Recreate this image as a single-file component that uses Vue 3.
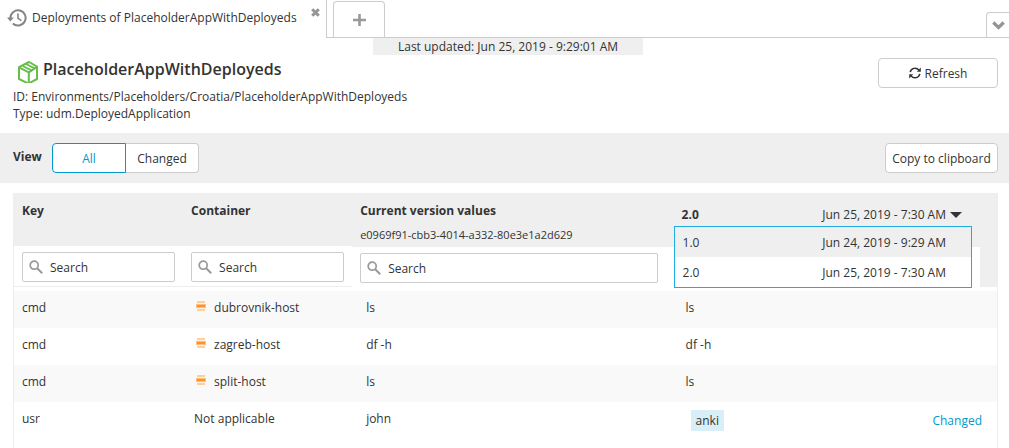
<script setup>
import { ref, computed } from 'vue'

const view = ref('All')
const search = ref({ key: '', container: '', value: '' })
const versions = [
  { name: '1.0', date: 'Jun 24, 2019 - 9:29 AM' },
  { name: '2.0', date: 'Jun 25, 2019 - 7:30 AM' },
]
const selected = ref(versions[1])
const open = ref(true)
const rows = [
  { key: 'cmd', container: 'dubrovnik-host', host: true, current: 'ls', other: 'ls' },
  { key: 'cmd', container: 'zagreb-host', host: true, current: 'df -h', other: 'df -h' },
  { key: 'cmd', container: 'split-host', host: true, current: 'ls', other: 'ls' },
  { key: 'usr', container: 'Not applicable', host: false, current: 'john', other: 'anki', changed: true },
]
const shown = computed(() =>
  rows.filter(
    (r) =>
      (view.value === 'All' || r.changed) &&
      r.key.includes(search.value.key) &&
      r.container.includes(search.value.container) &&
      r.current.includes(search.value.value)
  )
)
function choose(v) {
  selected.value = v
  open.value = false
}
</script>

<template>
  <div class="page">
    <header class="tabs">
      <div class="tab">
        <svg class="history" viewBox="0 0 20 18" aria-hidden="true">
          <path d="M3.4 9a7.6 7.6 0 1 1 2.4 5.5" fill="none" stroke="#858585" stroke-width="2" />
          <path d="M0 8.6h6.8L3.4 12.4z" fill="#858585" />
          <path d="M11 4.6V9.4l3.4 2.2" fill="none" stroke="#858585" stroke-width="1.6" />
        </svg>
        <span class="tab-title">Deployments of PlaceholderAppWithDeployeds</span>
        <button class="close" type="button" aria-label="Close tab">
          <svg viewBox="0 0 9 9" width="9" height="9"><path d="M1.2 1.2l6.6 6.6M7.8 1.2L1.2 7.8" stroke="#959595" stroke-width="3" /></svg>
        </button>
      </div>
      <div class="strip">
        <button class="add" type="button" aria-label="New tab">
          <svg viewBox="0 0 13 12" width="13" height="12"><path d="M0 6h13M6.5 0v12" stroke="#999" stroke-width="2.6" /></svg>
        </button>
        <button class="more" type="button" aria-label="More tabs">
          <svg viewBox="0 0 13 9" width="13" height="9"><path d="M1.3 1.5l5.2 5 5.2-5" fill="none" stroke="#959595" stroke-width="3.2" /></svg>
        </button>
      </div>
    </header>

    <div class="updated-line"><div class="updated">Last updated: Jun 25, 2019 - 9:29:01 AM</div></div>

    <section class="intro">
      <div class="facts">
        <h1>
          <svg class="box" viewBox="0 0 20 22" aria-hidden="true">
            <g fill="none" stroke="#68bd4b" stroke-width="2" stroke-linejoin="round">
              <path d="M1 18V6.2L11 1l8 4.6V18l-8.5 4.6z" />
              <path d="M1 6.4l9.8 5L19 6M10.8 11.4V22" />
              <path d="M4.6 5l9.4 4.6M8 3l8.6 4.4" stroke-width="1.8" />
            </g>
          </svg>
          PlaceholderAppWithDeployeds
        </h1>
        <p>ID: Environments/Placeholders/Croatia/PlaceholderAppWithDeployeds</p>
        <p>Type: udm.DeployedApplication</p>
      </div>
      <button class="btn refresh" type="button">
        <svg viewBox="0 0 12 12" width="12" height="12" aria-hidden="true">
          <g fill="none" stroke="#333" stroke-width="1.5">
            <path d="M1.2 5.2A4.9 4.9 0 0 1 9.8 3" />
            <path d="M10.8 6.8A4.9 4.9 0 0 1 2.2 9" />
          </g>
          <path d="M11.8 .6v4.2H7.8zM.2 11.4V7.2h4z" fill="#333" />
        </svg>
        Refresh
      </button>
    </section>

    <section class="toolbar">
      <span id="view-label" class="view-label">View</span>
      <div class="segment" role="group" aria-labelledby="view-label">
        <button
          v-for="v in ['All', 'Changed']"
          :key="v"
          type="button"
          :class="{ on: view === v }"
          :aria-pressed="view === v"
          @click="view = v"
        >{{ v }}</button>
      </div>
      <button class="btn copy" type="button">Copy to clipboard</button>
    </section>

    <table>
      <colgroup>
        <col class="c-key" /><col class="c-container" /><col class="c-current" /><col />
      </colgroup>
      <thead>
        <tr class="heads">
          <th scope="col">Key</th>
          <th scope="col">Container</th>
          <th scope="col">Current version values<small>e0969f91-cbb3-4014-a332-80e3e1a2d629</small></th>
          <th scope="col" class="version">
            <div class="picker">
              <button class="picked" type="button" aria-haspopup="listbox" :aria-expanded="open" @click="open = !open">
                <b>{{ selected.name }}</b>
                <span>{{ selected.date }}</span>
                <svg viewBox="0 0 12 6" width="12" height="6" aria-hidden="true"><path d="M0 0h12L6 6z" fill="#333" /></svg>
              </button>
              <ul v-if="open" class="menu" role="listbox" aria-label="Version">
                <li v-for="(v, i) in versions" :key="v.name" role="option" :aria-selected="v === selected" :class="{ hot: i === 0 }" @click="choose(v)">
                  <span>{{ v.name }}</span><span>{{ v.date }}</span>
                </li>
              </ul>
            </div>
          </th>
        </tr>
        <tr class="filters">
          <td v-for="f in ['key', 'container', 'value']" :key="f" :class="f">
            <div class="filter">
              <label class="field">
                <svg viewBox="0 0 14 14" width="14" height="14" aria-hidden="true">
                  <circle cx="5.2" cy="5.2" r="4" fill="none" stroke="#999" stroke-width="1.7" />
                  <path d="M8.2 8.2l5 5" stroke="#999" stroke-width="2" />
                </svg>
                <input v-model="search[f]" type="text" placeholder="Search" :aria-label="'Search ' + f" />
              </label>
            </div>
          </td>
          <td class="last"><div class="filter end"></div></td>
        </tr>
      </thead>
      <tbody>
        <tr v-for="r in shown" :key="r.container">
          <td>{{ r.key }}</td>
          <td :class="r.host ? 'host' : 'none'">
            <div class="container-name">
              <svg v-if="r.host" viewBox="0 0 10 10" width="10" height="10" aria-hidden="true">
                <path d="M1 0h8v2H1zM1 8h8v2H1z" fill="#fdd0a0" />
                <path d="M1 2h8v1H1zM1 7h8v1H1z" fill="#feeedd" />
                <path d="M0 3h10v4H0z" fill="#fdc080" />
                <path d="M1 4h8v2H1z" fill="#fb922b" />
              </svg>
              <span>{{ r.container }}</span>
            </div>
          </td>
          <td class="current">{{ r.current }}</td>
          <td class="other">
            <div v-if="r.changed" class="diff"><mark>{{ r.other }}</mark><a href="#changed">Changed</a></div>
            <template v-else>{{ r.other }}</template>
          </td>
        </tr>
      </tbody>
    </table>
  </div>
</template>

<style>
body {
  margin: 0;
  background: #fff;
}
</style>

<style scoped>
.page {
  color: #333;
  font: 12px/17px "Open Sans", "Noto Sans", sans-serif;
}
.page * {
  box-sizing: border-box;
}
button,
input {
  font: inherit;
  color: inherit;
  padding: 0;
}
svg {
  flex: none;
}
.tabs {
  display: flex;
  height: 38px;
}
.tab {
  display: flex;
  width: 327px;
  padding: 8px 6px 0 7px;
  border-right: 1px solid #ccc;
}
.history {
  width: 20px;
  height: 18px;
  margin-top: 1px;
}
.tab-title {
  flex: 1;
  margin: 1px 0 0 5px;
  white-space: nowrap;
}
.close {
  display: flex;
  align-self: flex-start;
  border: 0;
  background: none;
}
.strip {
  flex: 1;
  display: flex;
  justify-content: space-between;
  align-items: flex-end;
  padding-left: 6px;
  border-bottom: 1px solid #ccc;
}
.add,
.more {
  display: flex;
  align-items: center;
  justify-content: center;
  border: 1px solid #ccc;
  border-bottom: 0;
  background: #fff;
}
.add {
  width: 52px;
  height: 36px;
  border-radius: 4px 4px 0 0;
}
.more {
  width: 23px;
  height: 25px;
  border-right: 0;
  border-radius: 4px 0 0;
}
.updated-line {
  display: flex;
  justify-content: center;
  padding-left: 7px;
}
.updated {
  width: 270px;
  background: #efefef;
  text-align: center;
}
.intro {
  display: flex;
  justify-content: space-between;
  align-items: flex-start;
  padding: 3px 11px 11px 13px;
}
h1 {
  display: flex;
  align-items: flex-start;
  gap: 5px;
  height: 25px;
  margin: 0 0 5px;
  padding-left: 5px;
  font-size: 16px;
  line-height: 22px;
  font-weight: 600;
}
.box {
  width: 20px;
  height: 22px;
  margin-top: 3px;
}
p {
  margin: 0;
}
.btn {
  display: flex;
  align-items: center;
  justify-content: center;
  gap: 4px;
  height: 30px;
  border: 1px solid #ccc;
  border-radius: 4px;
  background: #fff;
}
.refresh {
  width: 120px;
}
.toolbar {
  display: flex;
  align-items: center;
  height: 50px;
  padding: 0 11px 0 13px;
  background: #efefef;
}
.view-label {
  width: 39px;
  padding-bottom: 4px;
  font-weight: 700;
}
.segment {
  display: flex;
}
.segment button {
  width: 73px;
  height: 30px;
  border: 1px solid #ccc;
  border-left: 0;
  border-radius: 0 4px 4px 0;
  background: #fff;
}
.segment button:first-child {
  width: 74px;
  border-left: 1px solid #ccc;
  border-radius: 4px 0 0 4px;
}
.segment .on {
  border-color: #0099cc !important;
  color: #0099cc;
}
.copy {
  width: 113px;
  margin-left: auto;
}
table {
  width: calc(100% - 24px);
  margin: 10px 11px 0 13px;
  table-layout: fixed;
  border: 1px solid #eee;
  border-width: 0 1px;
  border-collapse: separate;
  border-spacing: 0;
}
.c-key,
.c-container {
  width: 17.2%;
}
.c-current {
  width: 32.5%;
}
th,
td {
  padding: 8px 8px 0;
  text-align: left;
  vertical-align: top;
}
.heads th {
  height: 53px;
  padding-top: 9px;
  background: #efefef;
}
small {
  display: block;
  margin-top: 7px;
  font-size: 11px;
  font-weight: 400;
}
.heads .version {
  padding: 0 25px 0 2px;
  font-weight: 400;
}
.picker {
  position: relative;
}
.picked {
  display: flex;
  align-items: center;
  width: 100%;
  height: 33px;
  padding: 10px 10px 0 8px;
  border: 0;
  background: none;
}
.picked b {
  flex: 1;
  text-align: left;
}
.picked svg {
  margin-left: 4px;
}
.menu {
  position: absolute;
  z-index: 1;
  top: 33px;
  left: 0;
  right: 0;
  margin: 0;
  padding: 0;
  border: 1px solid #1fade0;
  background: #fff;
  list-style: none;
}
.menu li {
  display: flex;
  justify-content: space-between;
  height: 30px;
  padding: 1px 25px 0 8px;
  line-height: 30px;
}
.menu .hot {
  background: #efefef;
}
.filters td {
  padding: 0 0 4px;
}
.filters .value {
  border-top: 1px solid #efefef;
  padding-bottom: 3px;
}
.filter {
  height: 41px;
  padding: 6px 8px 0;
  border-bottom: 1px solid #eee;
}
.value .filter {
  padding-right: 14px;
  border-bottom: 0;
}
.filter.end {
  border-top: 1px solid #efefef;
  border-right: 17px solid #efefef;
  border-bottom: 0;
}
.field {
  display: flex;
  height: 30px;
  padding-left: 6px;
  border: 1px solid #ccc;
  border-radius: 2px;
  background: #fff;
}
.field svg {
  margin-top: 7px;
}
.field input {
  flex: 1;
  min-width: 0;
  height: 28px;
  margin-left: 7px;
  border: 0;
  outline: 0;
  background: none;
}
.field input::placeholder {
  color: #333;
  opacity: 1;
}
tbody td {
  height: 37px;
}
tbody tr:nth-child(odd) td {
  background: #f9f9f9;
}
tbody tr:nth-child(4) td {
  height: 46px;
}
.host {
  padding-left: 13px;
}
.container-name {
  display: flex;
  gap: 8px;
}
.container-name svg {
  margin-top: 2px;
}
.none {
  padding-left: 11px;
}
.current,
.other {
  padding-left: 14px;
}
.diff {
  display: flex;
  justify-content: space-between;
  padding: 0 7px 0 5px;
  line-height: 21px;
}
mark {
  padding: 0 5px;
  background: #d9eff7;
  color: inherit;
}
a {
  color: #0099cc;
  text-decoration: none;
}
</style>
